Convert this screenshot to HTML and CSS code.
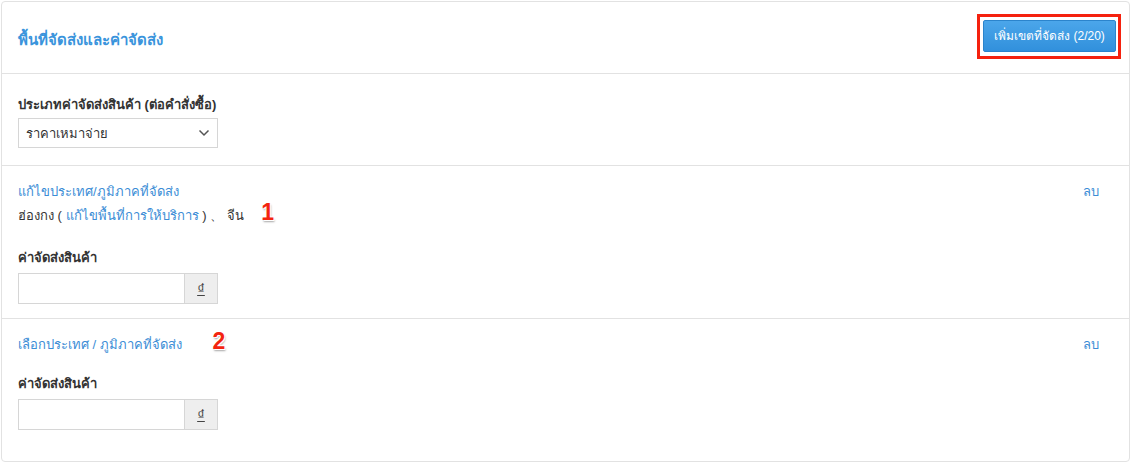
FILE: index.html
```html
<!DOCTYPE html>
<html lang="th">
<head>
<meta charset="utf-8">
<title>พื้นที่จัดส่งและค่าจัดส่ง</title>
<link rel="stylesheet" href="styles.css">
</head>
<body>
<div class="panel">
  <div class="panel-head">
    <h2 class="title">พื้นที่จัดส่งและค่าจัดส่ง</h2>
    <div class="highlight">
      <button class="btn-primary" type="button">เพิ่มเขตที่จัดส่ง (2/20)</button>
    </div>
  </div>

  <div class="section section-type">
    <div class="label">ประเภทค่าจัดส่งสินค้า (ต่อคำสั่งซื้อ)</div>
    <div class="select">
      <span>ราคาเหมาจ่าย</span>
      <svg class="chev" width="12" height="8" viewBox="0 0 12 8"><path d="M1.5 1.5 L6 6 L10.5 1.5" fill="none" stroke="#555" stroke-width="1.5"/></svg>
    </div>
  </div>

  <div class="section zone">
    <div class="zone-main">
      <div class="line"><a class="link" href="#">แก้ไขประเทศ/ภูมิภาคที่จัดส่ง</a></div>
      <div class="line line-2">ฮ่องกง ( <a class="link" href="#">แก้ไขพื้นที่การให้บริการ</a> ) 、 จีน <span class="mark mark-1">1</span></div>
      <div class="label label-fee">ค่าจัดส่งสินค้า</div>
      <div class="input-group">
        <input class="input" type="text">
        <span class="addon">₫</span>
      </div>
    </div>
    <a class="link del" href="#">ลบ</a>
  </div>

  <div class="section zone zone-last">
    <div class="zone-main">
      <div class="line"><a class="link" href="#">เลือกประเทศ / ภูมิภาคที่จัดส่ง</a> <span class="mark mark-2">2</span></div>
      <div class="label label-fee2">ค่าจัดส่งสินค้า</div>
      <div class="input-group">
        <input class="input" type="text">
        <span class="addon">₫</span>
      </div>
    </div>
    <a class="link del" href="#">ลบ</a>
  </div>
</div>
</body>
</html>
```

FILE: styles.css
```css
* { box-sizing: border-box; }
html, body { margin: 0; padding: 0; background: #fff; }
body {
  padding: 1px 1px 0 1px;
  font-family: "Liberation Sans", "Noto Sans", "DejaVu Sans", sans-serif;
  font-size: 13px;
  color: #333;
}
.panel {
  width: 1129px;
  height: 461px;
  border: 1px solid #e2e2e2;
  border-radius: 4px;
  background: #fff;
}
.panel-head {
  height: 72px;
  border-bottom: 1px solid #e2e2e2;
  display: flex;
  align-items: center;
  justify-content: space-between;
  padding: 0 8px 0 16px;
}
.title {
  margin: 5px 0 0 0;
  font-size: 15px;
  font-weight: bold;
  color: #3a94dc;
}
.highlight {
  border: 3px solid #f5210e;
  padding: 3px 2px 4px 3px;
  margin-top: -3px;
}
.btn-primary {
  display: block;
  width: 133px;
  height: 32px;
  border: 1px solid #2b84cc;
  border-radius: 2px;
  background: linear-gradient(#4ba6ea, #3190dc);
  color: #fff;
  font-family: inherit;
  font-size: 12px;
  padding: 0;
}
.section {
  border-bottom: 1px solid #e2e2e2;
  padding: 0 16px;
}
.section-type {
  height: 92px;
  padding-top: 22px;
}
.label {
  font-weight: bold;
  line-height: 18px;
}
.select {
  margin-top: 4px;
  width: 200px;
  height: 30px;
  border: 1px solid #d6d6d6;
  display: flex;
  align-items: center;
  justify-content: space-between;
  padding: 0 6px 0 7px;
  font-size: 13px;
}
.chev { margin-right: 1px; }
.zone {
  display: flex;
  justify-content: space-between;
  align-items: flex-start;
  height: 153px;
  padding-top: 15px;
  padding-right: 30px;
}
.zone-last {
  border-bottom: none;
  height: auto;
  padding-top: 15px;
}
.line { line-height: 22px; white-space: nowrap; }
.line-2 { margin-top: 2px; }
.link { color: #3b8dd6; text-decoration: none; }
.del { line-height: 22px; }
.label-fee { margin-top: 22px; margin-bottom: 6px; }
.label-fee2 { margin-top: 19px; margin-bottom: 6px; }
.input-group {
  display: flex;
  width: 200px;
  height: 31px;
}
.input {
  width: 166px;
  height: 31px;
  border: 1px solid #d6d6d6;
  border-right: none;
  margin: 0;
  padding: 0 6px;
  font: inherit;
}
.addon {
  width: 34px;
  height: 31px;
  border: 1px solid #d6d6d6;
  background: #eee;
  display: flex;
  align-items: center;
  justify-content: center;
  color: #444;
  font-size: 15px;
  text-decoration: underline;
}
.mark {
  display: inline-block;
  color: #f3240f;
  font-family: "Liberation Sans", sans-serif;
  font-weight: bold;
  font-size: 23px;
  line-height: 22px;
  vertical-align: top;
  text-shadow: 0 0 1px #fff, 1px 1px 0 #fff, -1px -1px 0 #fff, 1px 2px 2px rgba(0,0,0,0.35);
}
.mark-1 { margin-left: 14px; margin-top: -4px; }
.mark-2 { margin-left: 27px; margin-top: -4px; }
```
